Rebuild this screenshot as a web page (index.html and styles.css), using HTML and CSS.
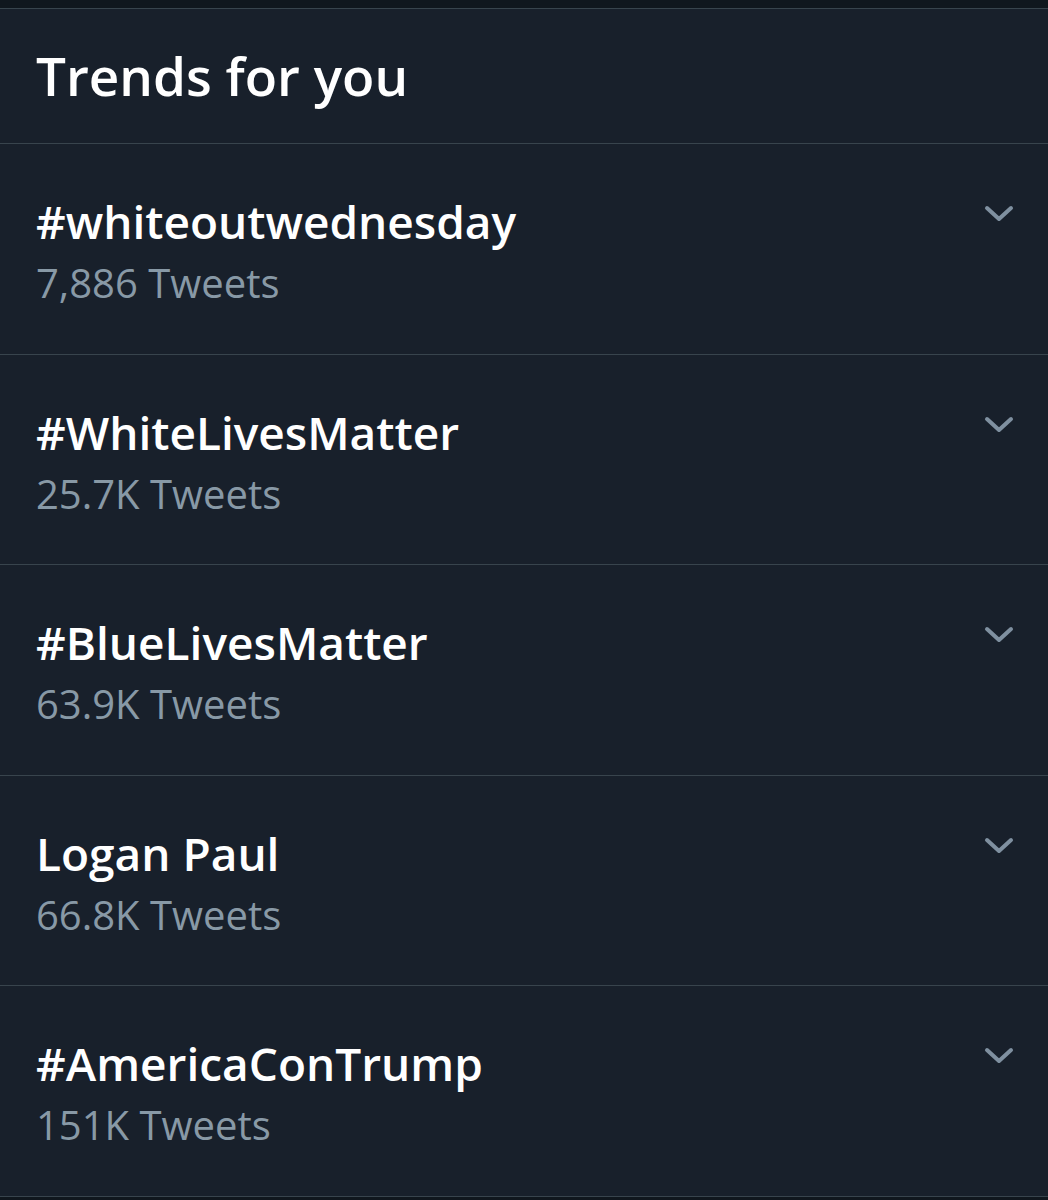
FILE: index.html
```html
<!DOCTYPE html>
<html>
<head>
<meta charset="utf-8">
<link rel="stylesheet" href="styles.css">
</head>
<body>
<div class="topstrip"></div>
<section class="panel">
  <header class="panel-head">
    <h1 class="title">Trends for you</h1>
  </header>
  <ul class="trends">
    <li class="trend">
      <div class="trend-text">
        <div class="trend-name">#whiteoutwednesday</div>
        <div class="trend-count">7,886 Tweets</div>
      </div>
      <svg class="chev" viewBox="0 0 30 18" width="30" height="18"><path d="M3 3 L15 14 L27 3" fill="none" stroke="currentColor" stroke-width="4" stroke-linecap="round" stroke-linejoin="round"/></svg>
    </li>
    <li class="trend">
      <div class="trend-text">
        <div class="trend-name">#WhiteLivesMatter</div>
        <div class="trend-count">25.7K Tweets</div>
      </div>
      <svg class="chev" viewBox="0 0 30 18" width="30" height="18"><path d="M3 3 L15 14 L27 3" fill="none" stroke="currentColor" stroke-width="4" stroke-linecap="round" stroke-linejoin="round"/></svg>
    </li>
    <li class="trend">
      <div class="trend-text">
        <div class="trend-name">#BlueLivesMatter</div>
        <div class="trend-count">63.9K Tweets</div>
      </div>
      <svg class="chev" viewBox="0 0 30 18" width="30" height="18"><path d="M3 3 L15 14 L27 3" fill="none" stroke="currentColor" stroke-width="4" stroke-linecap="round" stroke-linejoin="round"/></svg>
    </li>
    <li class="trend">
      <div class="trend-text">
        <div class="trend-name">Logan Paul</div>
        <div class="trend-count">66.8K Tweets</div>
      </div>
      <svg class="chev" viewBox="0 0 30 18" width="30" height="18"><path d="M3 3 L15 14 L27 3" fill="none" stroke="currentColor" stroke-width="4" stroke-linecap="round" stroke-linejoin="round"/></svg>
    </li>
    <li class="trend">
      <div class="trend-text">
        <div class="trend-name">#AmericaConTrump</div>
        <div class="trend-count">151K Tweets</div>
      </div>
      <svg class="chev" viewBox="0 0 30 18" width="30" height="18"><path d="M3 3 L15 14 L27 3" fill="none" stroke="currentColor" stroke-width="4" stroke-linecap="round" stroke-linejoin="round"/></svg>
    </li>
  </ul>
</section>
</body>
</html>
```
FILE: styles.css
```css
html, body {
  margin: 0;
  padding: 0;
  background: #10171e;
}
body {
  width: 1048px;
  height: 1200px;
  overflow: hidden;
  font-family: "Open Sans", "Noto Sans", sans-serif;
}
.topstrip {
  height: 8px;
  background: #10171e;
}
.panel {
  background: #18202b;
  border-top: 1px solid #38444d;
}
.panel-head {
  height: 135px;
  box-sizing: border-box;
  padding-left: 36px;
  padding-bottom: 2px;
  border-bottom: 1px solid #38444d;
  display: flex;
  align-items: center;
}
.title {
  margin: 0;
  color: #ffffff;
  font-size: 53px;
  font-weight: 600;
  line-height: 1;
}
.trends {
  list-style: none;
  margin: 0;
  padding: 0;
}
.trend {
  height: 210.5px;
  box-sizing: border-box;
  border-bottom: 1px solid #38444d;
  padding: 0 34px 0 36px;
  display: flex;
  justify-content: space-between;
  align-items: flex-start;
}
.trend-text {
  padding-top: 47px;
}
.trend-name {
  color: #ffffff;
  font-size: 46px;
  font-weight: 600;
  line-height: 60px;
}
.trend-count {
  color: #8899a6;
  font-size: 40px;
  line-height: 54px;
  margin-top: 5px;
}
.chev {
  color: #7f90a0;
  margin-top: 61px;
}
```
